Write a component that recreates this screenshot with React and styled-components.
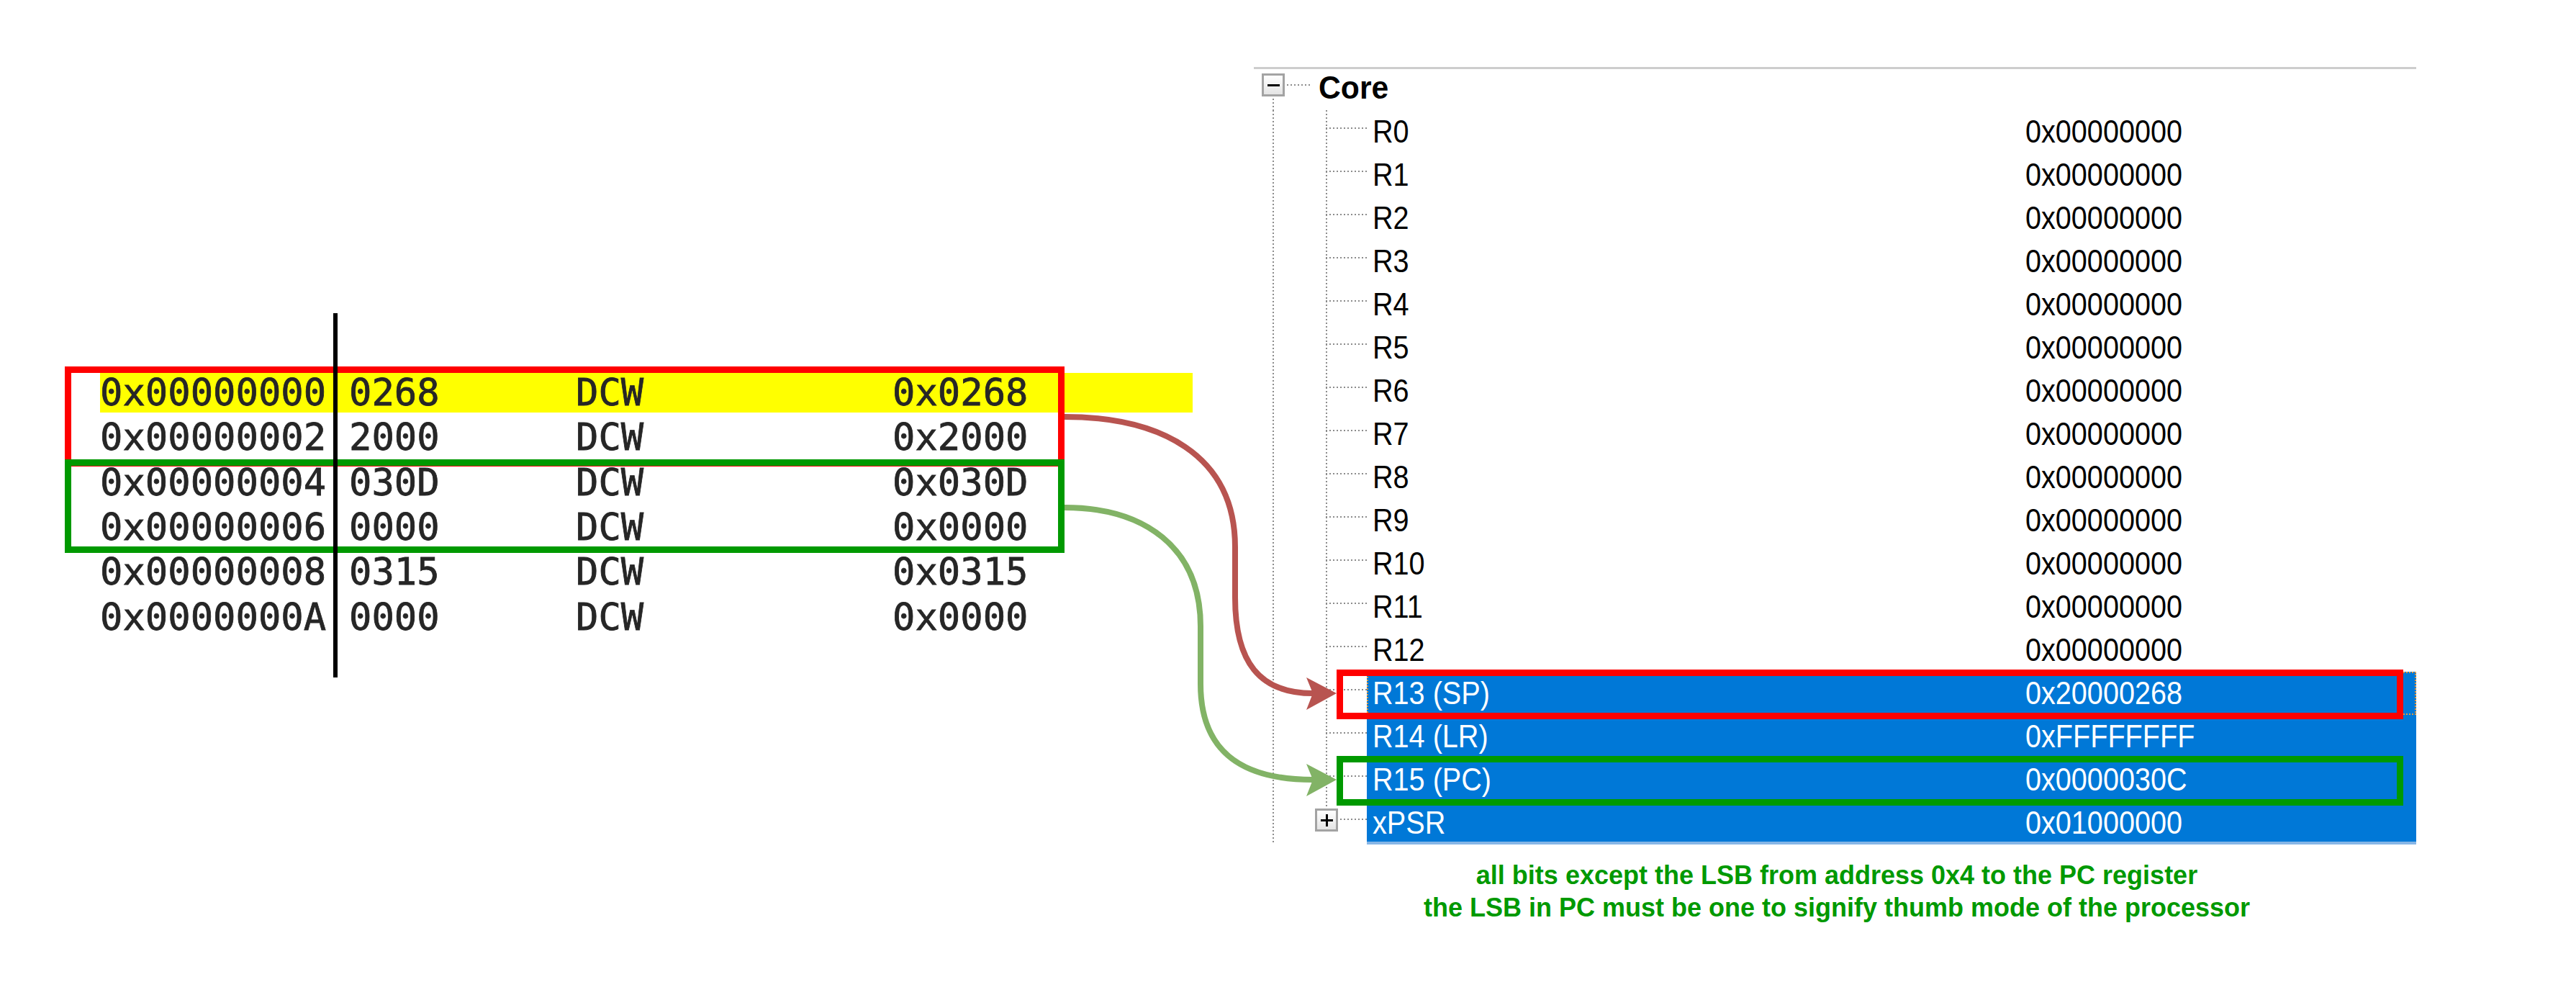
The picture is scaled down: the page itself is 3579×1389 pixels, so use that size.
import React from "react";
import styled, { createGlobalStyle, css } from "styled-components";

const GlobalStyle = createGlobalStyle`
  html, body { margin: 0; padding: 0; background: #ffffff; }
  body { width: 3579px; height: 1389px; overflow: hidden; }
`;

const Page = styled.div`
  position: relative;
  width: 3579px;
  height: 1389px;
  display: flex;
  align-items: flex-start;
  background: #ffffff;
`;

/* ---------- Left: disassembly listing ---------- */

const LeftPane = styled.section`
  box-sizing: border-box;
  flex: none;
  width: 1742px;
  padding: 518px 0 0 139px;
`;

const Listing = styled.div`
  position: relative;
  width: 1518px;
  display: flex;
  flex-direction: column;
  gap: 7.33px;
  font-family: "DejaVu Sans Mono", "Liberation Mono", monospace;
  font-size: 52.2px;
  color: #262626;
  -webkit-text-stroke: 0.8px #262626;
`;

const CodeRow = styled.div`
  display: grid;
  grid-template-columns: 346px 315px 440px 1fr;
  height: 55px;
  line-height: 55px;
  white-space: pre;
  background: ${(p) => (p.$current ? "#ffff00" : "transparent")};
`;

const Cell = styled.span``;

const Annotation = styled.div`
  position: absolute;
  box-sizing: border-box;
  left: -49px;
  width: 1389px;
  top: ${(p) => p.$top}px;
  height: ${(p) => p.$height}px;
  border: 9px solid ${(p) => p.$color};
  pointer-events: none;
`;

const Divider = styled.div`
  position: absolute;
  left: 324px;
  top: -83px;
  width: 6px;
  height: 506px;
  background: #000000;
`;

/* ---------- Right: register tree ---------- */

const RightPane = styled.section`
  box-sizing: border-box;
  flex: none;
  width: 1615px;
  padding-top: 93px;
`;

const TreePanel = styled.div`
  border-top: 3px solid #cdcdcd;
  font-family: "Liberation Sans", Arial, sans-serif;
  font-size: 44px;
  color: #000000;
`;

const dotsV = css`
  background-image: linear-gradient(to bottom, #8c8c8c 50%, transparent 50%);
  background-size: 2px 5px;
  background-repeat: repeat-y;
`;

const dotsH = css`
  background-image: linear-gradient(to right, #8c8c8c 50%, transparent 50%);
  background-size: 5px 2px;
  background-repeat: repeat-x;
`;

const NodeRow = styled.div`
  position: relative;
  display: flex;
  align-items: flex-start;
  height: 57px;
  &::after {
    content: "";
    position: absolute;
    left: 26px;
    top: 41px;
    bottom: 0;
    width: 2px;
    ${dotsV};
  }
`;

const Expander = styled.span`
  box-sizing: border-box;
  flex: none;
  width: 32px;
  height: 32px;
  margin: 6px 0 0 11px;
  border: 3px solid #a3a3a3;
  background: linear-gradient(#ffffff, #e4e4e4);
  display: flex;
  align-items: center;
  justify-content: center;
  &::before {
    content: "";
    width: 17px;
    height: 3px;
    background: #000000;
  }
  ${(p) =>
    p.$plus &&
    css`
      position: absolute;
      left: -15px;
      top: 10px;
      margin: 0;
      z-index: 1;
      &::after {
        content: "";
        position: absolute;
        left: 11.5px;
        top: 4.5px;
        width: 3px;
        height: 17px;
        background: #000000;
      }
    `}
`;

const NodeConnector = styled.span`
  flex: none;
  width: 35px;
  height: 2px;
  margin: 21px 0 0 3px;
  ${dotsH};
`;

const NodeLabel = styled.span`
  display: inline-block;
  margin-left: 9px;
  line-height: 51px;
  font-weight: bold;
  transform: scaleX(0.97);
  transform-origin: left center;
`;

const ChildList = styled.div`
  ${dotsV};
  background-position: 26px 0;
`;

const ChildRow = styled.div`
  position: relative;
  display: flex;
  height: 60px;
  padding-left: 100px;
`;

const Guide = styled.div`
  position: relative;
  flex: none;
  width: 57px;
  &::before {
    content: "";
    position: absolute;
    left: 0;
    top: 0;
    width: 2px;
    height: ${(p) => (p.$last ? "26px" : "100%")};
    ${dotsV};
  }
  &::after {
    content: "";
    position: absolute;
    left: 0;
    right: 0;
    top: 24px;
    height: 2px;
    ${dotsH};
  }
`;

const RowBody = styled.div`
  flex: 1;
  display: grid;
  grid-template-columns: 907px 1fr;
  align-items: center;
  padding-left: 8px;
  line-height: 60px;
  white-space: nowrap;
  background: ${(p) => (p.$selected ? "#0078d7" : "transparent")};
  color: ${(p) => (p.$selected ? "#ffffff" : "#000000")};
  ${(p) =>
    p.$focused &&
    css`
      outline: 2px dotted #e89a3c;
      outline-offset: -2px;
    `}
  ${(p) =>
    p.$last &&
    css`
      box-shadow: inset 0 -4px #86b6e6;
    `}
`;

const RegText = styled.span`
  display: inline-block;
  transform: scaleX(0.9);
  transform-origin: left center;
`;

const Mark = styled.div`
  position: absolute;
  box-sizing: border-box;
  left: 115px;
  top: -3px;
  width: 1482px;
  height: 69px;
  border: 9px solid ${(p) => p.$color};
  pointer-events: none;
  z-index: 2;
`;

const Caption = styled.p`
  margin: 19.5px 0 0;
  padding-left: 5px;
  text-align: center;
  font-family: "Liberation Sans", Arial, sans-serif;
  font-weight: bold;
  font-size: 36px;
  line-height: 45px;
  color: #009900;
`;

/* ---------- Connector arrows ---------- */

const ArrowLayer = styled.svg`
  position: absolute;
  left: 0;
  top: 0;
  width: 3579px;
  height: 1389px;
  pointer-events: none;
  z-index: 3;
`;

const listing = [
  ["0x00000000", "0268", "DCW", "0x0268"],
  ["0x00000002", "2000", "DCW", "0x2000"],
  ["0x00000004", "030D", "DCW", "0x030D"],
  ["0x00000006", "0000", "DCW", "0x0000"],
  ["0x00000008", "0315", "DCW", "0x0315"],
  ["0x0000000A", "0000", "DCW", "0x0000"],
];

const registers = [
  { name: "R0", value: "0x00000000" },
  { name: "R1", value: "0x00000000" },
  { name: "R2", value: "0x00000000" },
  { name: "R3", value: "0x00000000" },
  { name: "R4", value: "0x00000000" },
  { name: "R5", value: "0x00000000" },
  { name: "R6", value: "0x00000000" },
  { name: "R7", value: "0x00000000" },
  { name: "R8", value: "0x00000000" },
  { name: "R9", value: "0x00000000" },
  { name: "R10", value: "0x00000000" },
  { name: "R11", value: "0x00000000" },
  { name: "R12", value: "0x00000000" },
  { name: "R13 (SP)", value: "0x20000268", selected: true, focused: true, mark: "#ff0000" },
  { name: "R14 (LR)", value: "0xFFFFFFFF", selected: true },
  { name: "R15 (PC)", value: "0x0000030C", selected: true, mark: "#009900" },
  { name: "xPSR", value: "0x01000000", selected: true, expandable: true },
];

function Arrow({ d, head, color }) {
  return (
    <g>
      <path d={d} fill="none" stroke={color} strokeWidth="8" strokeLinecap="butt" />
      <polygon points={head} fill={color} />
    </g>
  );
}

export default function App() {
  return (
    <>
      <GlobalStyle />
      <Page>
        <LeftPane>
          <Listing>
            {listing.map((r, i) => (
              <CodeRow key={r[0]} $current={i === 0}>
                <Cell>{r[0]}</Cell>
                <Cell>{r[1]}</Cell>
                <Cell>{r[2]}</Cell>
                <Cell>{r[3]}</Cell>
              </CodeRow>
            ))}
            <Annotation $color="#ff0000" $top={-9} $height={139} />
            <Annotation $color="#009900" $top={120} $height={130} />
            <Divider />
          </Listing>
        </LeftPane>

        <RightPane>
          <TreePanel>
            <NodeRow>
              <Expander />
              <NodeConnector />
              <NodeLabel>Core</NodeLabel>
            </NodeRow>
            <ChildList>
              {registers.map((r, i) => {
                const last = i === registers.length - 1;
                return (
                  <ChildRow key={r.name}>
                    <Guide $last={last}>{r.expandable && <Expander $plus />}</Guide>
                    <RowBody $selected={r.selected} $focused={r.focused} $last={last}>
                      <RegText>{r.name}</RegText>
                      <RegText>{r.value}</RegText>
                    </RowBody>
                    {r.mark && <Mark $color={r.mark} />}
                  </ChildRow>
                );
              })}
            </ChildList>
          </TreePanel>
          <Caption>
            all bits except the LSB from address 0x4 to the PC register
            <br />
            the LSB in PC must be one to signify thumb mode of the processor
          </Caption>
        </RightPane>

        <ArrowLayer viewBox="0 0 3579 1389">
          <Arrow
            color="#b85450"
            d="M1479 579 C1610 579 1716 630 1716 760 L1716 830 C1716 920 1750 963 1824 963"
            head="1857,963 1815,941 1824,963 1815,986"
          />
          <Arrow
            color="#82b366"
            d="M1479 705 C1590 705 1668 760 1668 870 L1668 950 C1668 1040 1720 1083 1824 1083"
            head="1857,1083 1815,1061 1824,1083 1815,1106"
          />
        </ArrowLayer>
      </Page>
    </>
  );
}
